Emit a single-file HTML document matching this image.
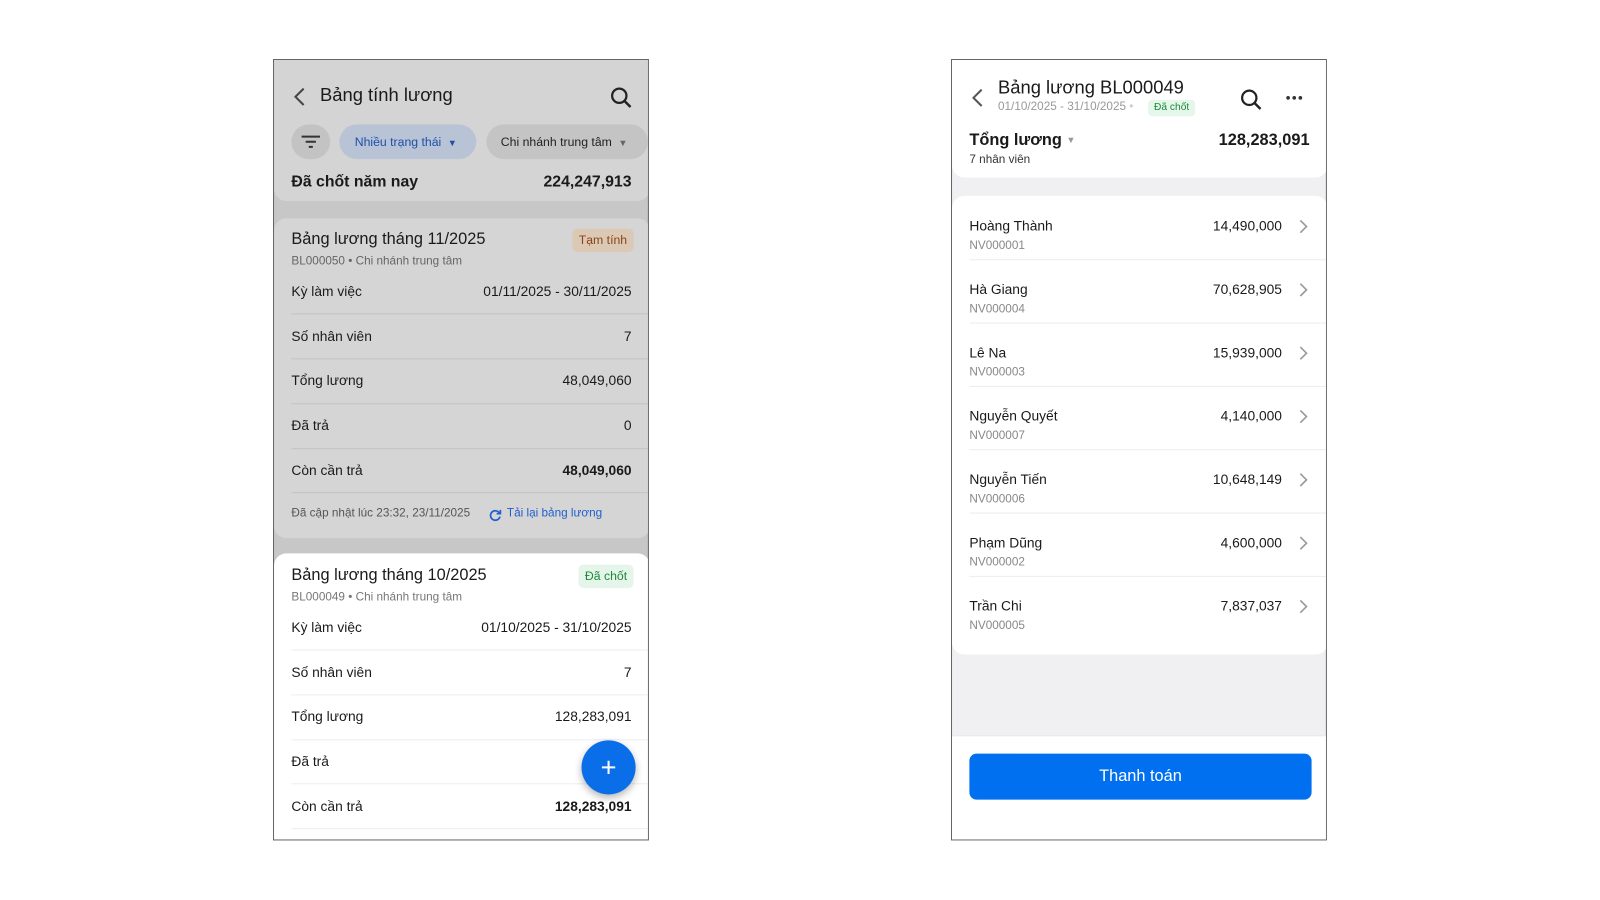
<!DOCTYPE html>
<html><head><meta charset="utf-8"><style>
*{margin:0;padding:0;box-sizing:border-box}
body{width:1600px;height:900px;background:#fff;position:relative;overflow:hidden;font-family:"Liberation Sans",sans-serif;color:#1a1a1a}
.ph{position:absolute;top:59px;width:368px;height:765px;transform:scale(1.0215);transform-origin:0 0;overflow:hidden;border:1px solid #666}
.a{position:absolute}
.r{position:absolute;right:16px}
.sep{position:absolute;left:17px;right:0;height:1px}
</style></head><body>

<!-- LEFT PHONE -->
<div class="ph" style="left:273px;background:#c7c7c7">
  <div class="a" style="left:0;top:0;width:368px;height:138px;background:#d4d4d4;border-radius:0 0 12px 12px"></div>
  <svg class="a" style="left:18px;top:26px" width="16" height="20" viewBox="0 0 16 20"><path d="M11 2 L3 10 L11 18" fill="none" stroke="#444" stroke-width="2"/></svg>
  <div class="a" style="left:45px;top:24px;font-size:18px;font-weight:500">Bảng tính lương</div>
  <svg class="a" style="left:328px;top:25px" width="24" height="24" viewBox="0 0 24 24"><circle cx="10" cy="10" r="7" fill="none" stroke="#222" stroke-width="2.2"/><path d="M15 15 L21 21" stroke="#222" stroke-width="2.4"/></svg>
  <div class="a" style="left:17px;top:63px;width:38px;height:34px;border-radius:17px;background:#c3c3c3"></div>
  <svg class="a" style="left:26px;top:73px" width="20" height="14" viewBox="0 0 20 14"><path d="M1 2H19M5 7H15M8 12H12" stroke="#333" stroke-width="2"/></svg>
  <div class="a" style="left:64px;top:63px;width:134px;height:34px;border-radius:17px;background:#b8c4d6;color:#1f4fa8;font-size:12px;line-height:34px;padding-left:15px">Nhiều trạng thái <span style="font-size:9px;margin-left:3px">▼</span></div>
  <div class="a" style="left:208px;top:63px;width:158px;height:34px;border-radius:17px;background:#c4c4c4;color:#222;font-size:12px;line-height:34px;padding-left:14px">Chi nhánh trung tâm <span style="font-size:9px;color:#666;margin-left:3px">▼</span></div>
  <div class="a" style="left:17px;top:111px;font-size:15.5px;font-weight:bold">Đã chốt năm nay</div>
  <div class="r" style="top:111px;font-size:15.5px;font-weight:bold">224,247,913</div>

  <div class="a" style="left:0;top:155px;width:368px;height:313px;background:#d5d5d5;border-radius:12px"></div>
  <div class="a" style="left:17px;top:167px;font-size:16px">Bảng lương tháng 11/2025</div>
  <div class="a" style="left:292px;top:165px;width:60px;height:23px;border-radius:5px;background:#dcc9b5;color:#8a4418;font-size:12px;line-height:23px;text-align:center">Tạm tính</div>
  <div class="a" style="left:17px;top:191px;font-size:11.5px;color:#666">BL000050 • Chi nhánh trung tâm</div>
  <div class="a" style="left:17px;top:219px;font-size:13.5px">Kỳ làm việc</div><div class="r" style="top:219px;font-size:13.5px">01/11/2025 - 30/11/2025</div>
  <div class="sep" style="top:248px;background:#c3c3c3"></div>
  <div class="a" style="left:17px;top:263px;font-size:13.5px">Số nhân viên</div><div class="r" style="top:263px;font-size:13.5px">7</div>
  <div class="sep" style="top:292px;background:#c3c3c3"></div>
  <div class="a" style="left:17px;top:306px;font-size:13.5px">Tổng lương</div><div class="r" style="top:306px;font-size:13.5px">48,049,060</div>
  <div class="sep" style="top:336px;background:#c3c3c3"></div>
  <div class="a" style="left:17px;top:350px;font-size:13.5px">Đã trả</div><div class="r" style="top:350px;font-size:13.5px">0</div>
  <div class="sep" style="top:380px;background:#c3c3c3"></div>
  <div class="a" style="left:17px;top:394px;font-size:13.5px">Còn cần trả</div><div class="r" style="top:394px;font-size:13.5px;font-weight:bold">48,049,060</div>
  <div class="sep" style="top:423px;background:#c3c3c3"></div>
  <div class="a" style="left:17px;top:438px;font-size:11.5px;color:#555">Đã cập nhật lúc 23:32, 23/11/2025</div>
  <svg class="a" style="left:210px;top:439px" width="13" height="13" viewBox="0 0 14 14"><path d="M11.5 5A5 5 0 1 0 12 8.5" fill="none" stroke="#1f5fcf" stroke-width="1.8"/><path d="M12.5 1.5V5.5H8.5" fill="none" stroke="#1f5fcf" stroke-width="1.8"/></svg>
  <div class="a" style="left:228px;top:438px;font-size:11.5px;color:#1f5fcf">Tải lại bảng lương</div>

  <div class="a" style="left:0;top:483px;width:368px;height:290px;background:#fff;border-radius:12px 12px 0 0"></div>
  <div class="a" style="left:17px;top:496px;font-size:16px">Bảng lương tháng 10/2025</div>
  <div class="a" style="left:298px;top:494px;width:54px;height:23px;border-radius:5px;background:#e6f5ea;color:#1c8a3a;font-size:12px;line-height:23px;text-align:center">Đã chốt</div>
  <div class="a" style="left:17px;top:520px;font-size:11.5px;color:#777">BL000049 • Chi nhánh trung tâm</div>
  <div class="a" style="left:17px;top:548px;font-size:13.5px">Kỳ làm việc</div><div class="r" style="top:548px;font-size:13.5px">01/10/2025 - 31/10/2025</div>
  <div class="sep" style="top:577px;background:#ededed"></div>
  <div class="a" style="left:17px;top:592px;font-size:13.5px">Số nhân viên</div><div class="r" style="top:592px;font-size:13.5px">7</div>
  <div class="sep" style="top:621px;background:#ededed"></div>
  <div class="a" style="left:17px;top:635px;font-size:13.5px">Tổng lương</div><div class="r" style="top:635px;font-size:13.5px">128,283,091</div>
  <div class="sep" style="top:665px;background:#ededed"></div>
  <div class="a" style="left:17px;top:679px;font-size:13.5px">Đã trả</div>
  <div class="sep" style="top:708px;background:#ededed"></div>
  <div class="a" style="left:17px;top:723px;font-size:13.5px">Còn cần trả</div><div class="r" style="top:723px;font-size:13.5px;font-weight:bold">128,283,091</div>
  <div class="sep" style="top:752px;background:#ededed"></div>
  <div class="a" style="left:301px;top:666px;width:53px;height:53px;border-radius:50%;background:#0a6ee8;box-shadow:0 3px 8px rgba(0,0,0,.3)"></div>
  <svg class="a" style="left:319px;top:684px" width="17" height="17" viewBox="0 0 17 17"><path d="M8.5 2V15M2 8.5H15" stroke="#fff" stroke-width="2"/></svg>
</div>

<!-- RIGHT PHONE -->
<div class="ph" style="left:951px;background:#f0f0f2">
  <div class="a" style="left:0;top:0;width:368px;height:115px;background:#fff;border-radius:0 0 12px 12px"></div>
  <svg class="a" style="left:18px;top:27px" width="16" height="20" viewBox="0 0 16 20"><path d="M11 2 L3 10 L11 18" fill="none" stroke="#555" stroke-width="2"/></svg>
  <div class="a" style="left:45px;top:17px;font-size:18px;font-weight:500">Bảng lương BL000049</div>
  <div class="a" style="left:45px;top:40px;font-size:11.5px;color:#999">01/10/2025 - 31/10/2025 <span style="color:#ccc">•</span></div>
  <div class="a" style="left:192px;top:39px;width:46px;height:16px;border-radius:4px;background:#e5f6ea;color:#1c8a3a;font-size:10px;line-height:16px;text-align:center">Đã chốt</div>
  <svg class="a" style="left:281px;top:27px" width="24" height="24" viewBox="0 0 24 24"><circle cx="10" cy="10" r="7" fill="none" stroke="#222" stroke-width="2.2"/><path d="M15 15 L21 21" stroke="#222" stroke-width="2.4"/></svg>
  <svg class="a" style="left:326px;top:34px" width="18" height="6" viewBox="0 0 18 6"><circle cx="3" cy="3" r="1.8" fill="#333"/><circle cx="9" cy="3" r="1.8" fill="#333"/><circle cx="15" cy="3" r="1.8" fill="#333"/></svg>
  <div class="a" style="left:17px;top:70px;font-size:16px;font-weight:bold">Tổng lương <span style="font-size:9px;color:#999;font-weight:normal;vertical-align:2px">▼</span></div>
  <div class="r" style="top:70px;font-size:16px;font-weight:bold">128,283,091</div>
  <div class="a" style="left:17px;top:92px;font-size:11.5px;color:#333">7 nhân viên</div>

  <div class="a" style="left:0;top:133px;width:368px;height:449px;background:#fff;border-radius:12px"></div>
  <div class="a" style="left:0;top:133px;width:368px">
    <div style="position:relative;height:62px"><div class="a" style="left:17px;top:22px;font-size:13.5px">Hoàng Thành</div><div class="a" style="left:17px;top:43px;font-size:11.5px;color:#888">NV000001</div><div class="a" style="right:45px;top:22px;font-size:13.5px">14,490,000</div><svg class="a" style="left:339px;top:22px" width="10" height="16" viewBox="0 0 10 16"><path d="M2 2L8 8L2 14" fill="none" stroke="#999" stroke-width="1.6"/></svg></div>
    <div class="sep" style="position:relative;background:#ececec"></div>
    <div style="position:relative;height:61px"><div class="a" style="left:17px;top:21px;font-size:13.5px">Hà Giang</div><div class="a" style="left:17px;top:42px;font-size:11.5px;color:#888">NV000004</div><div class="a" style="right:45px;top:21px;font-size:13.5px">70,628,905</div><svg class="a" style="left:339px;top:21px" width="10" height="16" viewBox="0 0 10 16"><path d="M2 2L8 8L2 14" fill="none" stroke="#999" stroke-width="1.6"/></svg></div>
    <div class="sep" style="position:relative;background:#ececec"></div>
    <div style="position:relative;height:61px"><div class="a" style="left:17px;top:21px;font-size:13.5px">Lê Na</div><div class="a" style="left:17px;top:42px;font-size:11.5px;color:#888">NV000003</div><div class="a" style="right:45px;top:21px;font-size:13.5px">15,939,000</div><svg class="a" style="left:339px;top:21px" width="10" height="16" viewBox="0 0 10 16"><path d="M2 2L8 8L2 14" fill="none" stroke="#999" stroke-width="1.6"/></svg></div>
    <div class="sep" style="position:relative;background:#ececec"></div>
    <div style="position:relative;height:61px"><div class="a" style="left:17px;top:21px;font-size:13.5px">Nguyễn Quyết</div><div class="a" style="left:17px;top:42px;font-size:11.5px;color:#888">NV000007</div><div class="a" style="right:45px;top:21px;font-size:13.5px">4,140,000</div><svg class="a" style="left:339px;top:21px" width="10" height="16" viewBox="0 0 10 16"><path d="M2 2L8 8L2 14" fill="none" stroke="#999" stroke-width="1.6"/></svg></div>
    <div class="sep" style="position:relative;background:#ececec"></div>
    <div style="position:relative;height:61px"><div class="a" style="left:17px;top:21px;font-size:13.5px">Nguyễn Tiến</div><div class="a" style="left:17px;top:42px;font-size:11.5px;color:#888">NV000006</div><div class="a" style="right:45px;top:21px;font-size:13.5px">10,648,149</div><svg class="a" style="left:339px;top:21px" width="10" height="16" viewBox="0 0 10 16"><path d="M2 2L8 8L2 14" fill="none" stroke="#999" stroke-width="1.6"/></svg></div>
    <div class="sep" style="position:relative;background:#ececec"></div>
    <div style="position:relative;height:61px"><div class="a" style="left:17px;top:21px;font-size:13.5px">Phạm Dũng</div><div class="a" style="left:17px;top:42px;font-size:11.5px;color:#888">NV000002</div><div class="a" style="right:45px;top:21px;font-size:13.5px">4,600,000</div><svg class="a" style="left:339px;top:21px" width="10" height="16" viewBox="0 0 10 16"><path d="M2 2L8 8L2 14" fill="none" stroke="#999" stroke-width="1.6"/></svg></div>
    <div class="sep" style="position:relative;background:#ececec"></div>
    <div style="position:relative;height:61px"><div class="a" style="left:17px;top:21px;font-size:13.5px">Trần Chi</div><div class="a" style="left:17px;top:42px;font-size:11.5px;color:#888">NV000005</div><div class="a" style="right:45px;top:21px;font-size:13.5px">7,837,037</div><svg class="a" style="left:339px;top:21px" width="10" height="16" viewBox="0 0 10 16"><path d="M2 2L8 8L2 14" fill="none" stroke="#999" stroke-width="1.6"/></svg></div>
  </div>

  <div class="a" style="left:0;top:661px;width:368px;height:110px;background:#fff;border-top:1px solid #e6e6e8"></div>
  <div class="a" style="left:17px;top:679px;width:335px;height:45px;border-radius:7px;background:#0070f0;color:#fff;font-size:16px;line-height:45px;text-align:center">Thanh toán</div>
</div>
</body></html>
